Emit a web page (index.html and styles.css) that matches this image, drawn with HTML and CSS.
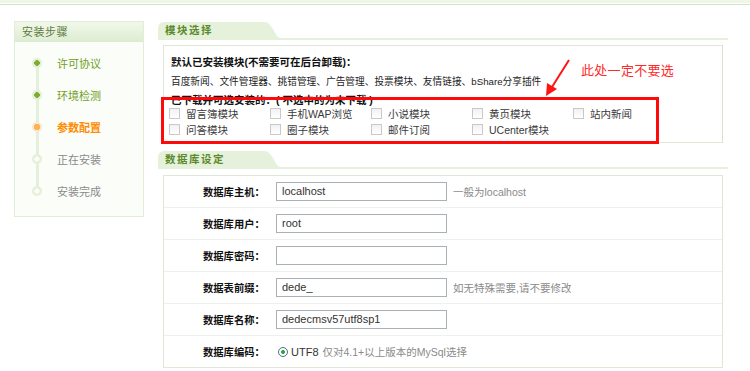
FILE: index.html
```html
<!DOCTYPE html>
<html lang="zh-CN">
<head>
<meta charset="utf-8">
<title>DedeCMS 安装 - 参数配置</title>
<link rel="stylesheet" href="styles.css">
</head>
<body>
<div class="topbar"><div class="topbar-fill"></div><div class="topbar-gap"></div><div class="topbar-line"></div></div>
<div class="main">
  <aside class="steps-panel">
    <div class="steps-head">安装步骤</div>
    <ul class="steps">
      <li class="step done"><span class="dot"></span><span class="step-text">许可协议</span></li>
      <li class="step done"><span class="dot"></span><span class="step-text">环境检测</span></li>
      <li class="step current"><span class="dot"></span><span class="step-text">参数配置</span></li>
      <li class="step todo"><span class="dot"></span><span class="step-text">正在安装</span></li>
      <li class="step todo"><span class="dot"></span><span class="step-text">安装完成</span></li>
    </ul>
  </aside>
  <main class="content">
    <div class="sec-head"><span class="tab"><span class="tab-text">模块选择</span><svg class="tab-curve" width="20" height="16" viewBox="0 0 20 16"><path d="M0 0 L3 0 C8 0 9 3 12 7 C15 12 16 16 20 16 L0 16 Z" fill="#e6f1dc"/></svg></span></div>
    <div class="module-box">
      <p class="mod-title">默认已安装模块(不需要可在后台卸载)：</p>
      <p class="mod-list">百度新闻、文件管理器、挑错管理、广告管理、投票模块、友情链接、bShare分享插件</p>
      <p class="mod-title mod-title2">已下载并可选安装的：( 不选中的为未下载 )</p>
      <div class="options">
        <label class="opt"><span class="cb"></span>留言簿模块</label>
        <label class="opt"><span class="cb"></span>手机WAP浏览</label>
        <label class="opt"><span class="cb"></span>小说模块</label>
        <label class="opt"><span class="cb"></span>黄页模块</label>
        <label class="opt"><span class="cb"></span>站内新闻</label>
        <label class="opt"><span class="cb"></span>问答模块</label>
        <label class="opt"><span class="cb"></span>圈子模块</label>
        <label class="opt"><span class="cb"></span>邮件订阅</label>
        <label class="opt"><span class="cb"></span>UCenter模块</label>
      </div>
      <div class="annot-box"></div>
      <svg class="annot-arrow" width="30" height="40" viewBox="0 0 30 40"><line x1="26" y1="1" x2="9" y2="28" stroke="#ff1414" stroke-width="2"/><path d="M3 37 L4 24 L14 30 Z" fill="#ff1414"/></svg>
      <div class="annot-text">此处一定不要选</div>
    </div>

    <div class="sec-head sec-head2"><span class="tab"><span class="tab-text">数据库设定</span><svg class="tab-curve" width="20" height="16" viewBox="0 0 20 16"><path d="M0 0 L3 0 C8 0 9 3 12 7 C15 12 16 16 20 16 L0 16 Z" fill="#e6f1dc"/></svg></span></div>
    <div class="db-box">
      <div class="db-row"><span class="db-label">数据库主机：</span><span class="inp">localhost</span><span class="hint">一般为localhost</span></div>
      <div class="db-row"><span class="db-label">数据库用户：</span><span class="inp">root</span></div>
      <div class="db-row"><span class="db-label">数据库密码：</span><span class="inp"></span></div>
      <div class="db-row"><span class="db-label">数据表前缀：</span><span class="inp">dede_</span><span class="hint">如无特殊需要,请不要修改</span></div>
      <div class="db-row"><span class="db-label">数据库名称：</span><span class="inp">dedecmsv57utf8sp1</span></div>
      <div class="db-row"><span class="db-label">数据库编码：</span><span class="radio"></span><span class="utf">UTF8</span><span class="hint hint-r">仅对4.1+以上版本的MySql选择</span></div>
    </div>
  </main>
</div>
</body>
</html>
```
FILE: styles.css
```css
* { box-sizing: border-box; }
html, body { margin: 0; padding: 0; background: #fff; }
body {
  width: 750px;
  height: 371px;
  overflow: hidden;
  font-family: "Liberation Sans", "Noto Sans CJK SC", sans-serif;
  font-size: 10.5px;
  color: #222;
}
p { margin: 0; }
ul { margin: 0; padding: 0; list-style: none; }

.topbar { height: 5px; }
.topbar-fill { height: 3px; background: #eef7e7; }
.topbar-gap { height: 1px; background: #fff; }
.topbar-line { height: 1px; background: #cfe6bf; }

.main {
  display: flex;
  align-items: flex-start;
  padding: 16px 0 0 14px;
  gap: 14px;
}

/* left steps panel */
.steps-panel {
  width: 130px;
  border: 1px solid #e1eed7;
  background: #fbfdf9;
}
.steps-head {
  height: 20px;
  line-height: 20px;
  padding-left: 7px;
  background: linear-gradient(#f1f8ea, #deedd2);
  border-bottom: 1px solid #dcebd0;
  color: #5e7a42;
  font-size: 11px;
  letter-spacing: 0.5px;
}
.steps {
  padding: 5px 0 9px 0;
  background: linear-gradient(#e4f0da, #e4f0da) no-repeat 21px 21px / 3px 128px;
}
.step {
  display: flex;
  align-items: center;
  height: 32px;
  padding-left: 17px;
}
.dot {
  width: 10px;
  height: 10px;
  border-radius: 50%;
  flex: none;
  margin-right: 15px;
}
.step-text { font-size: 11px; }
.done .dot { background: radial-gradient(circle, #7fae2e 0 2.6px, #e4efd9 3px); }
.done .step-text { color: #6f9d22; }
.current .dot { background: radial-gradient(circle, #ffb352 0 3px, #fbe7cd 3.4px); }
.current .step-text { color: #ff8c00; font-weight: bold; }
.todo .dot { background: radial-gradient(circle, #fbfdf9 0 2.4px, #e4f0da 2.8px); }
.todo .step-text { color: #8a8a8a; }

/* content */
.content {
  width: 570px;
  padding-top: 1px;
}
.sec-head {
  border-bottom: 2px solid #e6f1dc;
  height: 18px;
}
.tab {
  display: inline-flex;
  align-items: flex-end;
  height: 16px;
}
.tab-text {
  display: block;
  width: 103px;
  height: 16px;
  line-height: 17px;
  padding-left: 7px;
  background: #e6f1dc;
  border-top-left-radius: 6px;
  color: #5b8a2b;
  font-weight: bold;
  font-size: 10.5px;
  letter-spacing: 1.5px;
  white-space: nowrap;
}
.tab-curve { display: block; }

.module-box {
  position: relative;
  margin: 5px 5px 0 5px;
  height: 98px;
  border: 1px solid #dfe8d7;
  border-right-color: #d8e2d0;
  padding: 8px 7px 0 7px;
}
.mod-title { font-weight: bold; line-height: 16px; color: #111; }
.mod-list { line-height: 17px; margin-top: 3px; color: #222; font-size: 9.7px; }
.mod-title2 { margin-top: 3px; margin-bottom: -3px; line-height: 15px; }
.options {
  display: grid;
  grid-template-columns: repeat(5, 101px);
  grid-auto-rows: 16px;
  margin-left: -2px;
}
.opt {
  display: flex;
  align-items: center;
  color: #3a3a3a;
  white-space: nowrap;
}
.cb {
  width: 11px;
  height: 11px;
  border: 1px solid #c9c9c9;
  background: linear-gradient(#f1f1f1, #fff);
  margin-right: 6px;
  flex: none;
}
.annot-box {
  position: absolute;
  left: -3px;
  top: 51px;
  width: 498px;
  height: 47px;
  border: 3px solid #ff0a0a;
}
.annot-arrow {
  position: absolute;
  left: 379px;
  top: 13px;
}
.annot-text {
  position: absolute;
  left: 417px;
  top: 14px;
  color: #ff2a2a;
  font-size: 13px;
  letter-spacing: 0.3px;
}

.sec-head2 { margin-top: 8px; }

.db-box {
  margin: 6px 5px 0 5px;
  border: 1px solid #dfe8d7;
}
.db-row {
  display: flex;
  align-items: center;
  height: 32px;
  border-bottom: 1px solid #eef0eb;
  padding-left: 39px;
}
.db-row:last-child { border-bottom: 0; height: 31px; }
.db-label {
  width: 73px;
  font-weight: bold;
  color: #111;
  font-size: 10.3px;
}
.inp {
  width: 171px;
  height: 19px;
  border: 1px solid #a9b0b6;
  background: #fff;
  padding-left: 5px;
  line-height: 17px;
  font-size: 11px;
  color: #333;
}
.hint {
  margin-left: 6px;
  color: #8a8a8a;
  font-size: 10.5px;
}
.radio {
  width: 10px;
  height: 10px;
  margin-left: 2px;
  border-radius: 50%;
  border: 1px solid #4a6f8f;
  background: radial-gradient(circle, #37a53a 0 1.8px, #fff 2.2px);
  flex: none;
}
.utf { margin-left: 3px; color: #333; font-size: 11px; }
.hint-r { margin-left: 4px; }
```
